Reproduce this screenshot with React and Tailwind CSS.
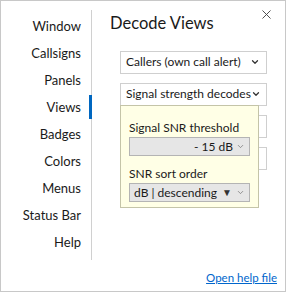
import { ChevronDown, X } from "lucide-react";

const navItems = [
  "Window",
  "Callsigns",
  "Panels",
  "Views",
  "Badges",
  "Colors",
  "Menus",
  "Status Bar",
  "Help",
];

const Select = ({ label }) => (
  <div className="flex h-[23px] items-center justify-between overflow-hidden whitespace-nowrap border border-[#cfcfcf] bg-white pl-[5px] pr-[6px] text-[12px] text-[#1a1a1a]">
    <span>{label}</span>
    <ChevronDown className="h-[10px] w-[10px] shrink-0 text-[#333]" strokeWidth={3} />
  </div>
);

export default function App() {
  return (
    <div
      className="flex h-[292px] w-[286px] overflow-hidden border border-[#c8c8c8] bg-white"
      style={{ fontFamily: 'Lato, "Noto Sans", sans-serif' }}
    >
      {/* sidebar */}
      <div className="mt-[9px] h-[250px] w-[91px] shrink-0 border-r border-[#d0d0d0]">
        <div className="pt-[3px]">
          {navItems.map((item) => (
            <div
              key={item}
              className="relative flex h-[27px] items-center justify-end whitespace-nowrap pr-[10px] text-[13px] text-[#1a1a1a]"
            >
              {item}
              {item === "Views" && (
                <span className="absolute right-[-1px] top-[1px] h-[24px] w-[3px] bg-[#0067c0]" />
              )}
            </div>
          ))}
        </div>
      </div>

      {/* content */}
      <div className="relative flex min-w-0 flex-1 flex-col">
        <div className="flex items-start justify-between">
          <h1 className="ml-[18px] mt-[10px] text-[16.5px] text-[#1a1a1a]">
            Decode Views
          </h1>
          <X className="mr-[11px] mt-[6px] h-[15px] w-[15px] text-[#444]" strokeWidth={1.5} />
        </div>

        <div className="ml-[28px] mr-[18px] mt-[15px] flex flex-col gap-[9px]">
          <Select label="Callers (own call alert)" />
          <Select label="Signal strength decodes" />
          {/* these two sit under the popup */}
          <Select label="" />
          <Select label="" />
        </div>

        {/* popup */}
        <div className="absolute left-[28px] top-[104px] h-[103px] w-[139px] whitespace-nowrap border border-[#c4c4a8] bg-[#ffffe6] px-[8px] pt-[13px] text-[12px] text-[#1a1a1a]">
          <div className="leading-[17px]">Signal SNR threshold</div>
          <div className="mt-[1px] flex h-[19px] items-center justify-end border border-[#b4b4b4] bg-[#e6e6e6] pr-[4px]">
            <span>- 15 dB</span>
            <ChevronDown className="ml-[3px] h-[9px] w-[9px] text-[#777]" strokeWidth={2} />
          </div>
          <div className="mt-[9px] leading-[17px]">SNR sort order</div>
          <div className="mt-[1px] flex h-[19px] items-center justify-between border border-[#b4b4b4] bg-[#e6e6e6] pl-[4px] pr-[4px]">
            <span>dB | descending</span>
            <span className="flex items-center">
              <span className="text-[10px] text-[#333]">▼</span>
              <ChevronDown className="ml-[4px] h-[9px] w-[9px] text-[#777]" strokeWidth={2} />
            </span>
          </div>
        </div>

        <div className="mt-auto mb-[3px] mr-[8px] text-right">
          <a className="text-[11.5px] text-[#0066cc] underline">Open help file</a>
        </div>
      </div>
    </div>
  );
}
